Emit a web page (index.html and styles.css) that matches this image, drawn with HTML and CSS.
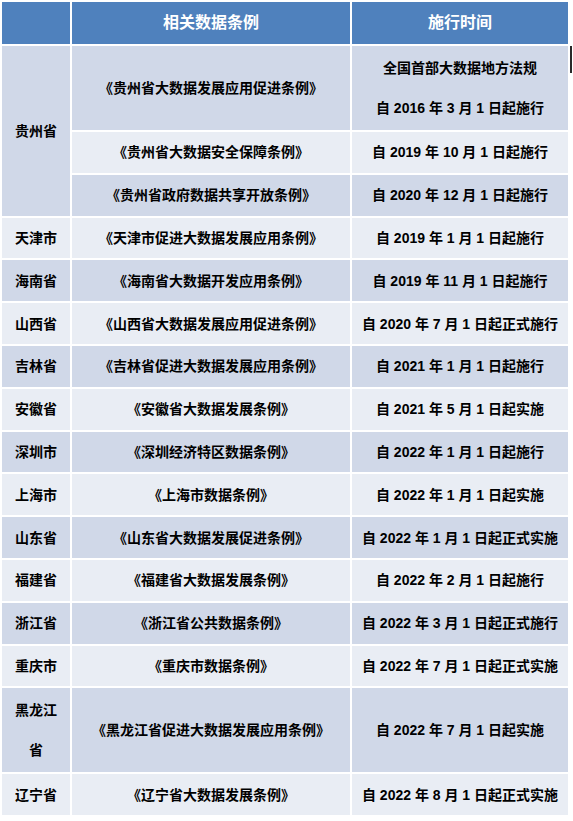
FILE: index.html
```html
<!DOCTYPE html>
<html lang="zh-CN">
<head>
<meta charset="utf-8">
<title>相关数据条例</title>
<link rel="stylesheet" href="styles.css">
</head>
<body>
<div class="page">
  <table class="laws">
    <colgroup>
      <col class="c-region">
      <col class="c-law">
      <col class="c-date">
    </colgroup>
    <thead>
      <tr class="head">
        <th></th>
        <th>相关数据条例</th>
        <th>施行时间</th>
      </tr>
    </thead>
    <tbody>
      <tr class="dbl dark">
        <td rowspan="3" class="dark">贵州省</td>
        <td>《贵州省大数据发展应用促进条例》</td>
        <td><div>全国首部大数据地方法规</div><div>自 2016 年 3 月 1 日起施行</div></td>
      </tr>
      <tr class="sgl light">
        <td>《贵州省大数据安全保障条例》</td>
        <td>自 2019 年 10 月 1 日起施行</td>
      </tr>
      <tr class="sgl dark">
        <td>《贵州省政府数据共享开放条例》</td>
        <td>自 2020 年 12 月 1 日起施行</td>
      </tr>
      <tr class="sgl light">
        <td>天津市</td>
        <td>《天津市促进大数据发展应用条例》</td>
        <td>自 2019 年 1 月 1 日起施行</td>
      </tr>
      <tr class="sgl dark">
        <td>海南省</td>
        <td>《海南省大数据开发应用条例》</td>
        <td>自 2019 年 11 月 1 日起施行</td>
      </tr>
      <tr class="sgl light">
        <td>山西省</td>
        <td>《山西省大数据发展应用促进条例》</td>
        <td>自 2020 年 7 月 1 日起正式施行</td>
      </tr>
      <tr class="sgl dark">
        <td>吉林省</td>
        <td>《吉林省促进大数据发展应用条例》</td>
        <td>自 2021 年 1 月 1 日起施行</td>
      </tr>
      <tr class="sgl light">
        <td>安徽省</td>
        <td>《安徽省大数据发展条例》</td>
        <td>自 2021 年 5 月 1 日起实施</td>
      </tr>
      <tr class="sgl dark">
        <td>深圳市</td>
        <td>《深圳经济特区数据条例》</td>
        <td>自 2022 年 1 月 1 日起施行</td>
      </tr>
      <tr class="sgl light">
        <td>上海市</td>
        <td>《上海市数据条例》</td>
        <td>自 2022 年 1 月 1 日起实施</td>
      </tr>
      <tr class="sgl dark">
        <td>山东省</td>
        <td>《山东省大数据发展促进条例》</td>
        <td>自 2022 年 1 月 1 日起正式实施</td>
      </tr>
      <tr class="sgl light">
        <td>福建省</td>
        <td>《福建省大数据发展条例》</td>
        <td>自 2022 年 2 月 1 日起施行</td>
      </tr>
      <tr class="sgl dark">
        <td>浙江省</td>
        <td>《浙江省公共数据条例》</td>
        <td>自 2022 年 3 月 1 日起正式施行</td>
      </tr>
      <tr class="sgl light">
        <td>重庆市</td>
        <td>《重庆市数据条例》</td>
        <td>自 2022 年 7 月 1 日起正式实施</td>
      </tr>
      <tr class="dbl dark">
        <td><div>黑龙江</div><div>省</div></td>
        <td>《黑龙江省促进大数据发展应用条例》</td>
        <td>自 2022 年 7 月 1 日起实施</td>
      </tr>
      <tr class="sgl light">
        <td>辽宁省</td>
        <td>《辽宁省大数据发展条例》</td>
        <td>自 2022 年 8 月 1 日起正式实施</td>
      </tr>
    </tbody>
  </table>
  <span class="caret" aria-hidden="true"></span>
</div>
</body>
</html>
```

FILE: styles.css
```css
html, body {
  margin: 0;
  padding: 0;
  background: #ffffff;
}

.page {
  position: relative;
  width: 573px;
}

.laws {
  border-collapse: separate;
  border-spacing: 2px;
  table-layout: fixed;
  width: 570px;
  font-family: "Liberation Sans", "Noto Sans CJK SC", sans-serif;
  font-weight: 700;
  color: #000000;
}

.c-region { width: 68px; }
.c-law { width: 278px; }
.c-date { width: 216px; }

.laws th,
.laws td {
  padding: 0;
  text-align: center;
  vertical-align: middle;
  white-space: nowrap;
}

.head th {
  height: 42px;
  background: #4f81bd;
  color: #ffffff;
  font-size: 16px;
  line-height: 20px;
}

.laws td {
  font-size: 14px;
  line-height: 40px;
}

.sgl td { height: 40.8px; }
.dbl td { height: 84px; }

.dark td,
td.dark { background: #d0d8e8; }
.light td { background: #e9edf4; }

.caret {
  position: absolute;
  left: 570px;
  top: 46px;
  width: 2px;
  height: 27px;
  background: #2a2a2a;
}
```
